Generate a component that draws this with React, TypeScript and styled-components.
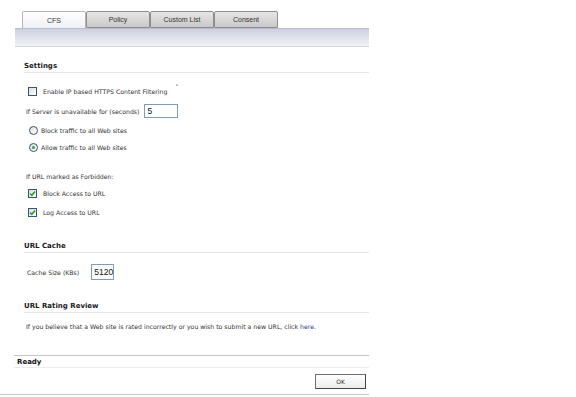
import React from "react";
import styled, { createGlobalStyle } from "styled-components";

const Global = createGlobalStyle`
  html, body { margin: 0; padding: 0; background: #ffffff; }
  body { font-family: "DejaVu Sans", Tahoma, sans-serif; color: #222; }
`;

const Page = styled.div`
  width: 369px;
  display: flex;
  flex-direction: column;
`;

const TabRow = styled.div`
  display: flex;
  padding: 11px 0 0 22px;
  height: 17px;
`;

const Tab = styled.div<{ $active?: boolean }>`
  width: 64px;
  box-sizing: border-box;
  height: 17px;
  display: flex;
  align-items: center;
  justify-content: center;
  font-family: "Liberation Sans", Arial, sans-serif;
  font-size: 7px;
  color: #333;
  border: 1px solid ${(p) => (p.$active ? "#b4b4b4" : "#8e8e8e")};
  border-bottom: ${(p) => (p.$active ? "none" : "1px solid #8e8e8e")};
  border-radius: 2px 2px 0 0;
  background: ${(p) =>
    p.$active
      ? "linear-gradient(#ffffff, #eef0f6)"
      : "linear-gradient(#e6e6e6, #c9c9c9)"};
`;

const Bar = styled.div`
  margin-left: 15px;
  width: 354px;
  height: 17px;
  border-top: 1px solid #b9bccd;
  border-bottom: 1px solid #d4d6e2;
  background: linear-gradient(#cdd0e0, #f1f2f7);
`;

const Content = styled.div`
  display: flex;
  flex-direction: column;
  padding-left: 24px;
`;

const Header = styled.div<{ $mt: number }>`
  margin-top: ${(p) => p.$mt}px;
  height: 10px;
  display: flex;
  align-items: center;
  font-size: 7px;
  font-weight: bold;
  color: #1a1a1a;
  border-bottom: 1px solid #e6e6e6;
  padding-bottom: 1px;
`;

const Row = styled.div<{ $mt: number; $h?: number; $indent?: number }>`
  margin-top: ${(p) => p.$mt}px;
  height: ${(p) => p.$h ?? 12}px;
  padding-left: ${(p) => p.$indent ?? 0}px;
  display: flex;
  align-items: center;
  font-size: 6.2px;
  color: #333;
  white-space: nowrap;
`;

const Box = styled.span`
  width: 9px;
  height: 9px;
  box-sizing: border-box;
  border: 1px solid #30557e;
  background: linear-gradient(135deg, #dcdcd6, #ffffff);
  margin-right: 6px;
  display: flex;
  align-items: center;
  justify-content: center;
`;

const Radio = styled.span`
  width: 9px;
  height: 9px;
  box-sizing: border-box;
  border: 1px solid #30557e;
  border-radius: 50%;
  background: linear-gradient(135deg, #dcdcd6, #ffffff);
  margin-right: 3px;
  display: flex;
  align-items: center;
  justify-content: center;
`;

const Dot = styled.span`
  width: 3px;
  height: 3px;
  border-radius: 50%;
  background: #3aa13a;
`;

const Tick = styled.span`
  font-size: 7px;
  font-weight: bold;
  margin-left: 8px;
  margin-top: -6px;
  color: #111;
`;

const Input = styled.div<{ $w: number; $h: number; $ml: number }>`
  width: ${(p) => p.$w}px;
  height: ${(p) => p.$h}px;
  box-sizing: border-box;
  border: 1px solid #7f9db9;
  margin-left: ${(p) => p.$ml}px;
  padding-left: 2px;
  display: flex;
  align-items: center;
  font-family: "Liberation Sans", Arial, sans-serif;
  font-size: 8.5px;
  color: #111;
  background: #fff;
`;

const Link = styled.span`
  color: #1f3f8f;
  margin-left: 2px;
`;

const Status = styled.div`
  margin-top: 23px;
  margin-left: 14px;
  width: 355px;
  box-sizing: border-box;
  height: 13px;
  border-top: 1px solid #c6c6c0;
  border-bottom: 1px solid #ececec;
  display: flex;
  align-items: center;
  padding-left: 3px;
  font-size: 7px;
  font-weight: bold;
  color: #111;
`;

const Footer = styled.div`
  margin-top: 6px;
  display: flex;
  justify-content: flex-end;
  padding-right: 3px;
`;

const Button = styled.div`
  width: 51px;
  height: 15px;
  box-sizing: border-box;
  border: 1px solid #6f6f6f;
  border-right-color: #444;
  border-bottom-color: #444;
  background: linear-gradient(#ffffff, #ececec);
  display: flex;
  align-items: center;
  justify-content: center;
  font-size: 6px;
  color: #333;
`;

const BottomLine = styled.div`
  margin-top: 5px;
  height: 1px;
  width: 369px;
  background: #c8c8c2;
`;

const Check = () => (
  <svg width="7" height="7" viewBox="0 0 7 7">
    <path d="M1 3.5 L2.8 5.3 L6 1.5" stroke="#22a022" strokeWidth="1.5" fill="none" />
  </svg>
);

export default function App() {
  return (
    <Page>
      <Global />
      <TabRow>
        <Tab $active>CFS</Tab>
        <Tab>Policy</Tab>
        <Tab>Custom List</Tab>
        <Tab>Consent</Tab>
      </TabRow>
      <Bar />
      <Content>
        <Header $mt={14}>Settings</Header>
        <Row $mt={12} $indent={4}>
          <Box />
          Enable IP based HTTPS Content Filtering
          <Tick>`</Tick>
        </Row>
        <Row $mt={7} $h={14} $indent={2}>
          If Server is unavailable for (seconds)
          <Input $w={34} $h={14} $ml={5}>5</Input>
        </Row>
        <Row $mt={6} $indent={5}>
          <Radio />
          Block traffic to all Web sites
        </Row>
        <Row $mt={5} $indent={5}>
          <Radio>
            <Dot />
          </Radio>
          Allow traffic to all Web sites
        </Row>
        <Row $mt={17} $indent={2}>
          If URL marked as Forbidden:
        </Row>
        <Row $mt={5} $indent={4}>
          <Box>
            <Check />
          </Box>
          Block Access to URL
        </Row>
        <Row $mt={7} $indent={4}>
          <Box>
            <Check />
          </Box>
          Log Access to URL
        </Row>
        <Header $mt={23}>URL Cache</Header>
        <Row $mt={11} $h={16} $indent={3}>
          Cache Size (KBs)
          <Input $w={23} $h={16} $ml={12}>5120</Input>
        </Row>
        <Header $mt={21}>URL Rating Review</Header>
        <Row $mt={7} $indent={2}>
          If you believe that a Web site is rated incorrectly or you wish to submit a new URL, click
          <Link>here</Link>.
        </Row>
      </Content>
      <Status>Ready</Status>
      <Footer>
        <Button>OK</Button>
      </Footer>
      <BottomLine />
    </Page>
  );
}
